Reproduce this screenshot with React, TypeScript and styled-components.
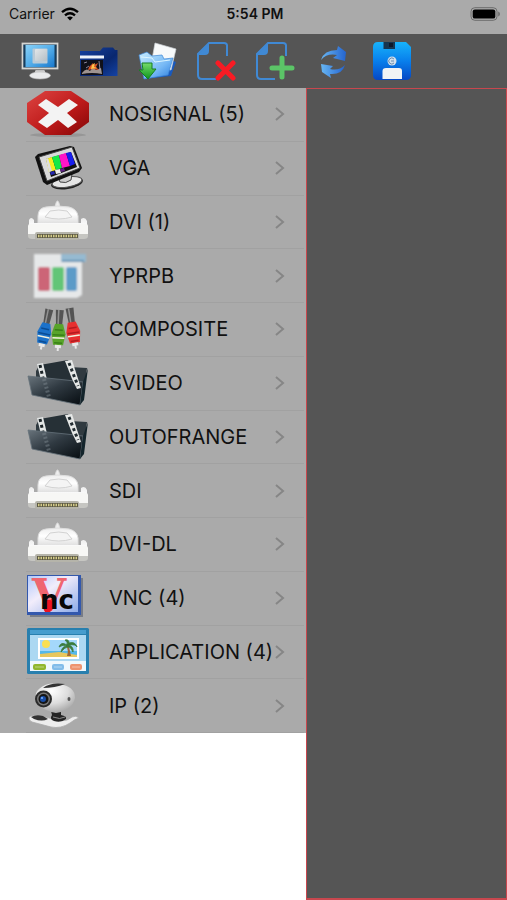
import React from "react";
import styled, { createGlobalStyle } from "styled-components";

const GlobalStyle = createGlobalStyle`
  *, *::before, *::after { box-sizing: border-box; }
  body { margin: 0; background: #fff; color: #111; font-family: Inter, "Liberation Sans", sans-serif; }
`;

const Screen = styled.div`
  min-height: 100vh;
  display: flex;
  flex-direction: column;
`;

const StatusBar = styled.header`
  display: grid;
  grid-template-columns: 1fr auto 1fr;
  align-items: center;
  height: 34px;
  padding: 0 6px 6px 9px;
  background: #aaa;
  font-size: 14px;
  line-height: 16px;
`;

const Carrier = styled.div`
  display: flex;
  align-items: center;
  gap: 6px;
`;

const Clock = styled.time`
  font-weight: 600;
`;

const Battery = styled.div`
  display: flex;
  justify-content: flex-end;
`;

const Toolbar = styled.nav`
  display: flex;
  align-items: center;
  height: 54px;
  padding: 0 20px;
  background: #555;
`;

const ToolGroup = styled.div`
  display: flex;
  justify-content: space-between;
  width: 100%;
  max-width: 392px;
`;

const ToolButton = styled.button`
  display: block;
  width: 40px;
  height: 40px;
  padding: 0;
  border: 0;
  background: none;
  cursor: pointer;
  svg { display: block; }
`;

const Content = styled.main`
  flex: 1;
  display: grid;
  grid-template-columns: minmax(306px, 3fr) 2fr;
`;

const SourceList = styled.ul`
  display: grid;
  grid-auto-rows: 1fr;
  align-self: start;
  min-height: 645px;
  margin: 0;
  padding: 0;
  list-style: none;
  background: #aaa;
`;

const SourceItem = styled.li`
  display: flex;
`;

const SourceButton = styled.button`
  flex: 1;
  display: flex;
  align-items: center;
  margin: 0 2px 0 26px;
  padding: 0 19px 0 0;
  border: 0;
  border-bottom: 1px solid #a1a1a1;
  background: none;
  color: inherit;
  font: inherit;
  font-size: 20px;
  line-height: 24px;
  text-align: left;
  white-space: nowrap;
  cursor: pointer;
  svg { flex: none; overflow: visible; }
`;

const SourceName = styled.span`
  flex: 1;
  min-width: 0;
  padding-left: 19px;
`;

const Canvas = styled.section`
  background: #555;
  border: 1px solid #c8474e;
  border-bottom-width: 2px;
`;

const Wifi = () => (
  <svg width="18" height="14" viewBox="0 0 18 14" aria-hidden="true" fill="none" stroke="#000" strokeWidth="2.4">
    <path d="M1 5.2Q9-1.8 17 5.2" />
    <path d="M4 8.4Q9 4.2 14 8.4" />
    <path d="M9 13.6L6.1 10.6Q9 8.4 11.9 10.6Z" fill="#000" stroke="none" />
  </svg>
);

const BatteryIcon = () => (
  <svg width="31" height="14" viewBox="0 0 31 14" role="img" aria-label="Battery full">
    <rect x="1" y="0.7" width="26" height="12.6" rx="3.8" fill="none" stroke="#6c6c6c" />
    <rect x="2.7" y="2.4" width="22.6" height="9.2" rx="2.2" />
    <path d="M28.2 4.6Q30 5.4 30 7T28.2 9.4Z" fill="#707070" />
  </svg>
);

const MonitorIcon = () => (
  <svg width="40" height="40" viewBox="0 0 40 40">
    <defs>
      <linearGradient id="screen" x2="1" y2="1"><stop stopColor="#87d1f8" /><stop offset=".5" stopColor="#55aee9" /><stop offset="1" stopColor="#1878cc" /></linearGradient>
      <linearGradient id="stand" x2="0" y2="1"><stop stopColor="#aaa" /><stop offset="1" stopColor="#f6f6f6" /></linearGradient>
      <linearGradient id="tile" x2="1" y2="1"><stop stopColor="#e2e6e8" /><stop offset="1" stopColor="#b4bfc6" /></linearGradient>
    </defs>
    <path d="M16 28H24L26 33H14Z" fill="url(#stand)" />
    <ellipse cx="20" cy="34.5" rx="10.5" ry="3.5" fill="#e9eaeb" stroke="#bbb" strokeWidth=".6" />
    <rect x="1.5" y="1.5" width="37" height="27" rx="1" fill="#d6d6d2" stroke="#858585" />
    <rect x="3.3" y="3.5" width="33.4" height="23" fill="#173d5c" />
    <rect x="5.5" y="4" width="29" height="22" fill="url(#screen)" />
    <rect x="12.5" y="7.5" width="15" height="15" rx="1" fill="#b9cad6" />
    <rect x="15" y="8" width="12" height="12" rx="1" fill="url(#tile)" />
  </svg>
);

const MediaFolderIcon = () => (
  <svg width="40" height="40" viewBox="0 0 40 40">
    <defs><linearGradient id="navy" x2="1" y2="1"><stop stopColor="#1742a2" /><stop offset=".6" stopColor="#09276f" /><stop offset="1" stopColor="#1443a5" /></linearGradient></defs>
    <path d="M1 10H21L24 6.5H34L36 9H38.5V35H1Z" fill="url(#navy)" />
    <path d="M1 14.5H25V17.5H1Z" fill="#eef2fa" />
    <path d="M2 19H24V34H2Z" fill="#111119" />
    <path d="M3 32Q7 26 11 30L14 26L17 29L22 27L23 33Q13 31 3 33Z" fill="#9d9390" />
    <path d="M10 26L14 22L15 24L19 22L17 26L20 29L14 28L9 29Z" fill="#d85324" />
    <path d="M13 24L16 22L15 26L18 27L12 28Z" fill="#ffc54c" />
    <path d="M5 22L8 21M20 20L21 29M7 27L10 25" stroke="#a9a3bd" strokeWidth=".8" />
  </svg>
);

const ImportFolderIcon = () => (
  <svg width="40" height="40" viewBox="0 0 40 40">
    <defs>
      <linearGradient id="folder" x2="1" y2="1"><stop stopColor="#c8edff" /><stop offset=".6" stopColor="#77b9f5" /><stop offset="1" stopColor="#287bde" /></linearGradient>
      <linearGradient id="arrow" x2="0" y2="1"><stop stopColor="#76dc6c" /><stop offset="1" stopColor="#0d951b" /></linearGradient>
    </defs>
    <path d="M31 18L39 21L34 35L6 38Z" fill="#1a5abd" />
    <path d="M18 2L39 8L34 29L14 24Z" fill="#f7f9fa" stroke="#cdd3d7" strokeWidth=".7" />
    <path d="M2 14L10 11L15 15L25 14L27 18L36 17L31 34L7 38Z" fill="url(#folder)" stroke="#3d86d6" strokeWidth=".7" />
    <path d="M4 16L15 17L18 21L33 19" fill="none" stroke="#ddf5ff" />
    <path d="M5 22H15V28H19L11 38L2 29H6Z" fill="url(#arrow)" stroke="#177f22" />
  </svg>
);

const PageOutline = () => (
  <>
    <path d="M31 15V4.5Q31 2 28 2H13L2 13V34Q2 38 6 38H20" fill="none" stroke="#4089d4" strokeWidth="2" />
    <path d="M13 2V10Q13 14 9 14H2Z" fill="#4089d4" />
  </>
);

const RemovePageIcon = () => (
  <svg width="40" height="40" viewBox="0 0 40 40">
    <PageOutline />
    <path d="M22 22L37 37M37 22L22 37" stroke="#f91b24" strokeWidth="5" strokeLinecap="round" />
  </svg>
);

const AddPageIcon = () => (
  <svg width="40" height="40" viewBox="0 0 40 40">
    <PageOutline />
    <path d="M27 17V36M17 27H37" stroke="#5bc467" strokeWidth="5" strokeLinecap="round" />
  </svg>
);

const RefreshIcon = () => (
  <svg width="40" height="40" viewBox="0 0 40 40">
    <defs><linearGradient id="refresh"><stop stopColor="#68b7f4" /><stop offset="1" stopColor="#2464cf" /></linearGradient></defs>
    <path d="M8 19Q11 9 24 9L25 5L33 11L32 20L20 17L24 14Q14 12 8 19Z" fill="url(#refresh)" />
    <path d="M32 24Q29 34 17 33L18 37L9 31L8 23L20 25L17 28Q26 30 32 24Z" fill="url(#refresh)" />
  </svg>
);

const SaveIcon = () => (
  <svg width="40" height="40" viewBox="0 0 40 40">
    <defs><linearGradient id="disk" x2="0" y2="1"><stop stopColor="#18b3fa" /><stop offset=".5" stopColor="#087fec" /><stop offset="1" stopColor="#0647c4" /></linearGradient></defs>
    <path d="M6 1H34L39 6V34Q39 39 34 39H6Q1 39 1 34V6Q1 1 6 1Z" fill="url(#disk)" />
    <path d="M11.5 1H23V8H11.5Z" fill="#17354f" /><path d="M17 2H21V6H17Z" fill="#0e1829" />
    <circle cx="20" cy="20" r="4.5" fill="#d2e0ed" /><path d="M22 18A3 3 0 1 0 22 22M19 20H22" fill="none" stroke="#6b8cad" />
    <path d="M10.5 38V30Q10.5 27 14 27H27Q30 27 30 30V38Z" fill="#f1f3f5" />
  </svg>
);

const NoSignalIcon = () => (
  <>
    <defs>
      <linearGradient id="stop" x2="1" y2="1"><stop stopColor="#dd4542" /><stop offset=".55" stopColor="#be1a1a" /><stop offset="1" stopColor="#830707" /></linearGradient>
    </defs>
    <ellipse cx="32" cy="47" rx="28" ry="2" fill="#888" opacity=".6" />
    <path d="M19 3H45L63 15V34L45 47H19L1 34V15Z" fill="url(#stop)" />
    <path d="M12 17L20 11L32 19L43 11L52 17L41 25L51 34L42 40L32 32L21 40L12 34L23 25Z" fill="#f3f3f3" />
  </>
);

const VgaIcon = () => (
  <>
    <ellipse cx="41" cy="41" rx="16" ry="6" fill="#222" transform="rotate(-9 41 41)" />
    <ellipse cx="41" cy="40" rx="15" ry="5" fill="#e6e6e6" stroke="#555" transform="rotate(-9 41 40)" />
    <path d="M32 35L46 32L45 38Q40 42 34 40Z" fill="#ccc" stroke="#444" />
    <path d="M9 15L12 12L44 4L48 5L56 26L53 30L21 43L17 40Z" fill="#111" />
    <path d="M13 15L46 5L54 26L21 39Z" fill="#d9d9d9" stroke="#444" />
    <path d="M20 17L45 10L51 25L25 35Z" fill="#111" />
    <path d="M20 17L26 15L30 28L23 30Z" fill="#f5ed20" /><path d="M26 15L33 13L36 26L30 28Z" fill="#16e846" />
    <path d="M33 13L40 11L44 24L36 26Z" fill="#ff15c7" /><path d="M40 11L45 10L49 22L44 24Z" fill="#181eef" />
    <path d="M20 17L22 16L26 29L23 30Z" fill="#dddddd" /><path d="M29 28L34 27L35 31L30 32Z" fill="#eee" /><path d="M24 30L28 29L29 32L25 33Z" fill="#2527ae" />
    <path d="M34 27L38 26L39 29L35 30Z" fill="#5f2486" />
  </>
);

const ConnectorIcon = () => (
  <>
    <defs><linearGradient id="plug" x2="0" y2="1"><stop stopColor="#ededed" /><stop offset=".45" stopColor="#fff" /><stop offset="1" stopColor="#ddd" /></linearGradient></defs>
    <path d="M29 12Q30 5 31.5 5T34 12Z" fill="#eee" stroke="#ddd" />
    <path d="M12 28V20Q12 12 20 11Q32 9 43 11Q51 13 52 20V28Z" fill="url(#plug)" stroke="#dedede" />
    <path d="M19 21L24 15Q33 13 41 15L46 21Q33 25 19 21Z" fill="#f4f4f4" stroke="#d2d2d2" />
    <path d="M3 24Q5 20 8 24V27H55V23Q59 20 61 25V41H3Z" fill="url(#plug)" />
    <rect x="2" y="28" width="60" height="12" rx="2" fill="#f7f7f5" />
    <path d="M2 38H62V40Q62 43 58 43H6Q2 43 2 40Z" fill="#c6c6c2" />
    <rect x="9" y="36" width="44" height="8" rx="2" fill="#b5b4aa" />
    <path d="M11 40H52" stroke="#5c5945" strokeWidth="4" />
    <path d="M12 40H51" stroke="#d4cd88" strokeWidth="2.5" strokeDasharray="1.5 1" />
  </>
);

const ComponentVideoIcon = () => (
  <>
    <defs><filter id="soft" x="-10%" y="-10%" width="120%" height="120%"><feGaussianBlur stdDeviation="1" /></filter></defs>
    <g filter="url(#soft)">
      <path d="M8 4H56V45L51 48H8Z" fill="#e6e8e9" />
      <path d="M35 4H60V12H35Z" fill="#96bad1" />
      <path d="M36 11H58" stroke="#5e92b5" strokeWidth="2" />
      <rect x="12" y="17" width="12" height="24" rx="2" fill="#cc6577" />
      <rect x="26" y="17" width="12" height="24" rx="2" fill="#62c577" />
      <rect x="40" y="17" width="11" height="24" rx="2" fill="#5c9bc8" />
    </g>
  </>
);

const Plug = ({ x, y, color, dark, tilt }: { x: number; y: number; color: string; dark: string; tilt: number }) => (
  <g transform={`translate(${x} ${y}) rotate(${tilt})`}>
    <path d="M-4-16H4L3 0H-3Z" fill="#535353" /><path d="M-1-16V0" stroke="#929292" strokeWidth="1.5" />
    <path d="M-4-2H4L7 8L5 19H-5L-7 8Z" fill={color} />
    <path d="M-4 4H4M-6 9H6M-4 17H4" stroke={dark} strokeWidth="1.5" />
    <path d="M-6 12H6" stroke="#f2f2df" strokeWidth="1.5" />
    <path d="M-3 19H3V22H1V25H-1V22H-3Z" fill="#e8e8e8" />
  </g>
);

const CompositeIcon = () => (
  <>
    <Plug x={20} y={22} color="#1c72ca" dark="#0c4d94" tilt={12} />
    <Plug x={33} y={23} color="#58a42a" dark="#397f18" tilt={3} />
    <Plug x={46} y={21} color="#e73030" dark="#b31b20" tilt={-9} />
  </>
);

const FilmIcon = () => (
  <>
    <defs><linearGradient id="film" x2="1" y2="1"><stop stopColor="#69747c" /><stop offset=".45" stopColor="#303a42" /><stop offset="1" stopColor="#050b0f" /></linearGradient></defs>
    <path d="M10 14L14 7L27 9L61 11L57 44L10 35Z" fill="#303a40" />
    <path d="M14 8L42 3L53 31L18 36Z" fill="#263036" />
    <path d="M11 7L17 6L24 35L18 36Z" fill="#e2e5e5" />
    <path d="M14 8L20 34" stroke="#1b2327" strokeWidth="3" strokeDasharray="3 3" />
    <path d="M2 19L40 23L57 25L54 48L6 38Z" fill="url(#film)" stroke="#65717a" strokeWidth=".8" />
    <path d="M57 25L62 11L58 43L54 48Z" fill="#14252c" />
    <path d="M18 22L23 40" stroke="#7a858c" strokeWidth="4" strokeDasharray="2 2" opacity=".5" />
    <path d="M39 4L46 3L55 31L51 32L46 22Z" fill="#e6e8e7" /><path d="M43 6L52 29" stroke="#222c31" strokeWidth="3" strokeDasharray="3 3" />
  </>
);

const VncIcon = () => (
  <>
    <defs><linearGradient id="vnc" x2="1" y2="1"><stop stopColor="#b0c9fc" /><stop offset=".4" stopColor="#f2edfb" /><stop offset="1" stopColor="#8eabe8" /></linearGradient></defs>
    <path d="M4 6H57V45H4Z" fill="#555e70" opacity=".6" />
    <path d="M1 3H55V43H1Z" fill="#3358ad" /><path d="M2 4H52V40H2Z" fill="url(#vnc)" />
    <path d="M18 26L28 27V36L24 40H19L17 36Z" fill="#ed1320" />
    <text x="6" y="39" fill="#ef6670" fontFamily="DejaVu Serif, serif" fontSize="44" fontWeight="700">V</text>
    <rect x="18" y="28" width="8" height="11" rx="2" fill="#ed1320" />
    <text x="14" y="37" fill="#080808" fontFamily="DejaVu Sans, sans-serif" fontSize="26" fontWeight="700">nc</text>
  </>
);

const ApplicationIcon = () => (
  <>
    <rect x="1" y="2" width="62" height="46" rx="1.5" fill="#287fae" />
    <path d="M4 4H60V8H4Z" fill="#469dce" /><path d="M4 9H60V45H4Z" fill="#eff8fd" /><path d="M4 9H60V35H4Z" fill="#acd8f2" />
    <path d="M12 12H53V33H12Z" fill="#fff" />
    <path d="M14 14H51V27H14Z" fill="#a4d8fb" /><path d="M14 25H51V29H14Z" fill="#55b8e9" /><path d="M14 28L33 26L51 29V31H14Z" fill="#e8c75e" />
    <circle cx="20" cy="18" r="4" fill="#f9df53" />
    <path d="M40 19Q43 25 41 30H45Q44 24 42 18Z" fill="#9d6838" />
    <path d="M41 19Q35 15 33 21Q37 18 41 20Q36 20 35 26Q39 21 42 21Q45 21 47 26Q48 21 43 19Q50 18 51 21Q49 15 43 17Q43 13 39 14Q42 16 41 19Z" fill="#397b3c" stroke="#397b3c" strokeWidth=".8" />
    <rect x="7" y="38" width="13" height="6" rx="2" fill="#91b72d" /><rect x="26" y="38" width="12" height="6" rx="2" fill="#81bce9" /><rect x="44" y="38" width="12" height="6" rx="2" fill="#ee9470" />
    <path d="M9 41H18M28 41H36M46 41H54" stroke="#fff" opacity=".4" />
  </>
);

const WebcamIcon = () => (
  <>
    <defs><radialGradient id="webcam" cx=".4" cy=".25" r=".85"><stop stopColor="#fff" /><stop offset=".5" stopColor="#ddd" /><stop offset="1" stopColor="#999" /></radialGradient></defs>
    <path d="M3 37Q6 34 16 36L34 41Q42 41 46 37Q50 35 53 38Q49 39 44 43Q35 49 25 47L6 42Q2 40 3 37Z" fill="#ededed" stroke="#aaa" strokeWidth=".8" />
    <path d="M5 37Q10 34 17 36L22 39Q16 42 8 39Z" fill="#333" />
    <path d="M25 31H35V35Q41 36 40 39Q35 43 28 41Q23 39 26 35Z" fill="#242424" />
    <path d="M27 37Q34 40 39 37" fill="none" stroke="#8a8a8a" />
    <path d="M13 9Q21 2 33 4Q49 6 49 18Q46 31 30 33Q10 29 10 17Q9 12 13 9Z" fill="url(#webcam)" />
    <path d="M17 8Q24 2 39 4Q29 8 17 8Z" fill="#333" />
    <circle cx="17.5" cy="19" r="8.5" fill="#2b2b2b" /><circle cx="17.5" cy="19" r="6.5" fill="#777" /><circle cx="17.5" cy="19" r="5" fill="#151515" />
    <circle cx="17" cy="19" r="3" fill="#164ba5" /><circle cx="16" cy="18" r="1" fill="#7eb5ff" /><ellipse cx="43" cy="19" rx="1.5" ry="2" fill="#555" />
  </>
);

const tools = [
  { label: "Display", Icon: MonitorIcon },
  { label: "Media folder", Icon: MediaFolderIcon },
  { label: "Import", Icon: ImportFolderIcon },
  { label: "Remove page", Icon: RemovePageIcon },
  { label: "Add page", Icon: AddPageIcon },
  { label: "Refresh", Icon: RefreshIcon },
  { label: "Save", Icon: SaveIcon },
];

const sources = [
  { name: "NOSIGNAL (5)", Icon: NoSignalIcon },
  { name: "VGA", Icon: VgaIcon },
  { name: "DVI (1)", Icon: ConnectorIcon },
  { name: "YPRPB", Icon: ComponentVideoIcon },
  { name: "COMPOSITE", Icon: CompositeIcon },
  { name: "SVIDEO", Icon: FilmIcon },
  { name: "OUTOFRANGE", Icon: FilmIcon },
  { name: "SDI", Icon: ConnectorIcon },
  { name: "DVI-DL", Icon: ConnectorIcon },
  { name: "VNC (4)", Icon: VncIcon },
  { name: "APPLICATION (4)", Icon: ApplicationIcon },
  { name: "IP (2)", Icon: WebcamIcon },
];

export default function App() {
  return (
    <>
      <GlobalStyle />
      <Screen>
        <StatusBar>
          <Carrier>Carrier <Wifi /></Carrier>
          <Clock>5:54 PM</Clock>
          <Battery><BatteryIcon /></Battery>
        </StatusBar>
        <Toolbar aria-label="Tools">
          <ToolGroup>
            {tools.map(({ label, Icon }) => (
              <ToolButton key={label} type="button" aria-label={label}><Icon /></ToolButton>
            ))}
          </ToolGroup>
        </Toolbar>
        <Content>
          <SourceList>
            {sources.map(({ name, Icon }) => (
              <SourceItem key={name}>
                <SourceButton type="button">
                  <svg width="64" height="52" viewBox="0 0 64 52" aria-hidden="true"><Icon /></svg>
                  <SourceName>{name}</SourceName>
                  <svg width="11" height="16" viewBox="0 0 11 16" aria-hidden="true" fill="none" stroke="#868686" strokeWidth="2">
                    <path d="M2 2L9 8L2 14" />
                  </svg>
                </SourceButton>
              </SourceItem>
            ))}
          </SourceList>
          <Canvas aria-label="Display canvas" />
        </Content>
      </Screen>
    </>
  );
}
